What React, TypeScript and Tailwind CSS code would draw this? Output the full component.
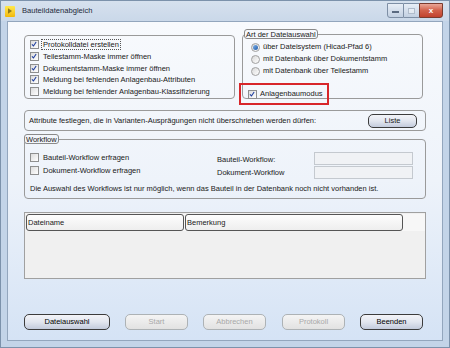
import React from "react";

const font = { fontFamily: '"Liberation Sans", Arial, sans-serif' };

function Check({ checked }: { checked?: boolean }) {
  return (
    <span className="relative inline-block w-[9px] h-[9px] border border-[#8e8f8f] bg-gradient-to-br from-[#dcdcdc] to-[#ffffff] shrink-0">
      {checked && (
        <svg viewBox="0 0 9 9" className="absolute left-0 top-0 w-[7px] h-[7px]">
          <path d="M1.2 4.2 L3.2 6.4 L6.6 1.2" fill="none" stroke="#1f3f9f" strokeWidth="1.4" />
        </svg>
      )}
    </span>
  );
}

function Radio({ checked }: { checked?: boolean }) {
  return (
    <span className="relative inline-flex items-center justify-center w-[9px] h-[9px] rounded-full border border-[#a0a0a0] bg-gradient-to-br from-[#d8d8d8] to-[#ffffff] shrink-0">
      {checked && <span className="w-[5px] h-[5px] rounded-full bg-gradient-to-br from-[#7fb2e8] to-[#1e5aa8]" />}
    </span>
  );
}

function CheckRow({ checked, label, dotted }: { checked?: boolean; label: string; dotted?: boolean }) {
  return (
    <div className="flex items-center gap-[3px] h-[11.7px]">
      <Check checked={checked} />
      <span className={dotted ? "outline outline-1 outline-dotted outline-[#555] px-[1px] leading-[9px]" : "px-[1px]"}>{label}</span>
    </div>
  );
}

function Btn({ label, w, disabled }: { label: string; w: string; disabled?: boolean }) {
  return (
    <div
      className={
        "h-[16px] flex items-center justify-center rounded-[5px] border " +
        w +
        " " +
        (disabled
          ? "border-[#adb2b5] bg-gradient-to-b from-[#f4f4f4] to-[#e2e2e2] text-[#a8a8a8]"
          : "border-[#3c3c3c] bg-gradient-to-b from-[#f3f4f8] via-[#e2e6ef] to-[#c3cbdc] text-black")
      }
    >
      {label}
    </div>
  );
}

export default function App() {
  return (
    <div className="w-[450px] h-[348px] bg-[#c3d4e8] flex flex-col text-[7.5px] text-[#202020] overflow-hidden border border-[#7c92ab]" style={font}>
      {/* title bar */}
      <div className="h-[20px] flex items-center pl-[4px] pr-[6px] bg-gradient-to-b from-[#d6e1ee] to-[#cad8e9] shrink-0">
        <div className="w-[10px] h-[11px] bg-gradient-to-b from-[#ffe94a] to-[#f2b800] flex items-center justify-center rounded-[1px]">
          <svg viewBox="0 0 6 8" className="w-[4px] h-[6px]">
            <path d="M0 0 L6 4 L0 8 Z" fill="#3a3000" opacity="0.55" />
          </svg>
        </div>
        <span className="ml-[7px] text-[7.6px] text-[#1e2a3a]">Bauteildatenabgleich</span>
        <div className="ml-auto flex self-start mt-[2px]">
          <div className="w-[17px] h-[15px] rounded-bl-[3px] border border-[#7e8fa5] bg-gradient-to-b from-[#e8eef6] to-[#c2d0e2] flex items-end justify-center pb-[4px]">
            <span className="w-[7px] h-[2px] bg-white border border-[#5a6a80]" />
          </div>
          <div className="w-[15px] h-[15px] border-y border-[#7e8fa5] bg-gradient-to-b from-[#e8eef6] to-[#c2d0e2] flex items-center justify-center">
            <span className="w-[7px] h-[6px] border border-[#b0bccb] bg-white/40" />
          </div>
          <div className="w-[24px] h-[15px] rounded-br-[3px] border border-[#7a3b2e] bg-gradient-to-b from-[#e9a797] via-[#d1604a] to-[#c1412d] flex items-center justify-center">
            <span className="text-white font-bold text-[8px] leading-none">x</span>
          </div>
        </div>
      </div>

      {/* client */}
      <div className="flex-1 mx-[6px] mb-[6px] border border-[#93a6bd] bg-gradient-to-b from-[#f8fafd] via-[#eef3fa] to-[#d5e3f5] flex flex-col px-[16px]">
        {/* top row */}
        <div className="flex mt-[8px] h-[69px]">
          <div className="w-[211px] mt-[5px] h-[64px] border border-[#9a9a9a] rounded-[4px] pl-[5px] pt-[3px]">
            <CheckRow checked label="Protokolldatei erstellen" dotted />
            <CheckRow checked label="Teilestamm-Maske immer öffnen" />
            <CheckRow checked label="Dokumentstamm-Maske immer öffnen" />
            <CheckRow checked label="Meldung bei fehlenden Anlagenbau-Attributen" />
            <CheckRow label="Meldung bei fehlender Anlagenbau-Klassifizierung" />
          </div>
          <div className="relative ml-[7px] w-[181px] mt-[4px] h-[65px] border border-[#9a9a9a] rounded-[4px]">
            <div className="absolute left-[1px] top-[-6px] px-[1px] h-[10px] leading-[9px] border border-[#8a8a8a] rounded-[3px] bg-[#f6f8fc]">Art der Dateiauswahl</div>
            <div className="pl-[8px] pt-[6px] flex flex-col">
              <div className="flex items-center gap-[3px] h-[12px]"><Radio checked />über Dateisystem (Hicad-Pfad 6)</div>
              <div className="flex items-center gap-[3px] h-[12px]"><Radio />mit Datenbank über Dokumentstamm</div>
              <div className="flex items-center gap-[3px] h-[12px]"><Radio />mit Datenbank über Teilestamm</div>
            </div>
            <div className="absolute left-[-4px] top-[48px] w-[90px] h-[22px] border-2 border-[#d8262a] flex items-center pl-[7px] gap-[3px]">
              <Check checked />
              <span>Anlagenbaumodus</span>
            </div>
          </div>
        </div>

        {/* attribute row */}
        <div className="mt-[11px] h-[21px] border border-[#9a9a9a] rounded-[4px] flex items-center pl-[4px] pr-[8px]">
          <span>Attribute festlegen, die in Varianten-Ausprägungen nicht überschrieben werden dürfen:</span>
          <div className="ml-auto w-[49px] h-[14px] rounded-[5px] border border-[#3c3c3c] bg-gradient-to-b from-[#f3f4f8] via-[#e2e6ef] to-[#c3cbdc] flex items-center justify-center">Liste</div>
        </div>

        {/* workflow */}
        <div className="relative mt-[8px] h-[60px] border border-[#9a9a9a] rounded-[4px]">
          <div className="absolute left-[-1px] top-[-6px] px-[1px] h-[10px] leading-[9px] border border-[#8a8a8a] rounded-[3px] bg-[#f2f5fa]">Workflow</div>
          <div className="flex pt-[11px] pl-[5px]">
            <div className="w-[187px] flex flex-col">
              <div className="flex items-center gap-[3px] h-[13px]"><Check /><span className="px-[1px]">Bauteil-Workflow erfragen</span></div>
              <div className="flex items-center gap-[3px] h-[13px]"><Check /><span className="px-[1px]">Dokument-Workflow erfragen</span></div>
            </div>
            <div className="w-[97px] flex flex-col pt-[2px]">
              <div className="h-[13px] flex items-center">Bauteil-Workflow:</div>
              <div className="h-[13px] flex items-center">Dokument-Workflow</div>
            </div>
            <div className="flex flex-col gap-[1px] pt-[1px]">
              <div className="w-[99px] h-[13px] border border-[#c4c9cf] bg-[#f0f2f5]" />
              <div className="w-[99px] h-[13px] border border-[#c4c9cf] bg-[#f0f2f5]" />
            </div>
          </div>
          <div className="pl-[5px] mt-[4px]">Die Auswahl des Workflows ist nur möglich, wenn das Bauteil in der Datenbank noch nicht vorhanden ist.</div>
        </div>

        {/* list */}
        <div className="mt-[13px] h-[67px] border border-[#a0a0a0] bg-[#f0f0f0] pt-[1px] pl-[1px]">
          <div className="flex h-[17px] bg-[#f7f7f7]">
            <div className="w-[158px] h-full border border-[#555] rounded-[3px] flex items-center pl-[1px] bg-gradient-to-b from-[#fdfdfd] to-[#eeeeee]">Dateiname</div>
            <div className="w-[218px] ml-[1px] h-full border border-[#555] rounded-[3px] flex items-center pl-[1px] bg-gradient-to-b from-[#fdfdfd] to-[#eeeeee]">Bemerkung</div>
          </div>
        </div>

        {/* buttons */}
        <div className="mt-auto mb-[10px] flex items-center">
          <Btn label="Dateiauswahl" w="w-[86px]" />
          <div className="ml-[15px]"><Btn label="Start" w="w-[63px]" disabled /></div>
          <div className="ml-[15px]"><Btn label="Abbrechen" w="w-[63px]" disabled /></div>
          <div className="ml-[16px]"><Btn label="Protokoll" w="w-[63px]" disabled /></div>
          <div className="ml-[15px]"><Btn label="Beenden" w="w-[63px]" /></div>
        </div>
      </div>
    </div>
  );
}
